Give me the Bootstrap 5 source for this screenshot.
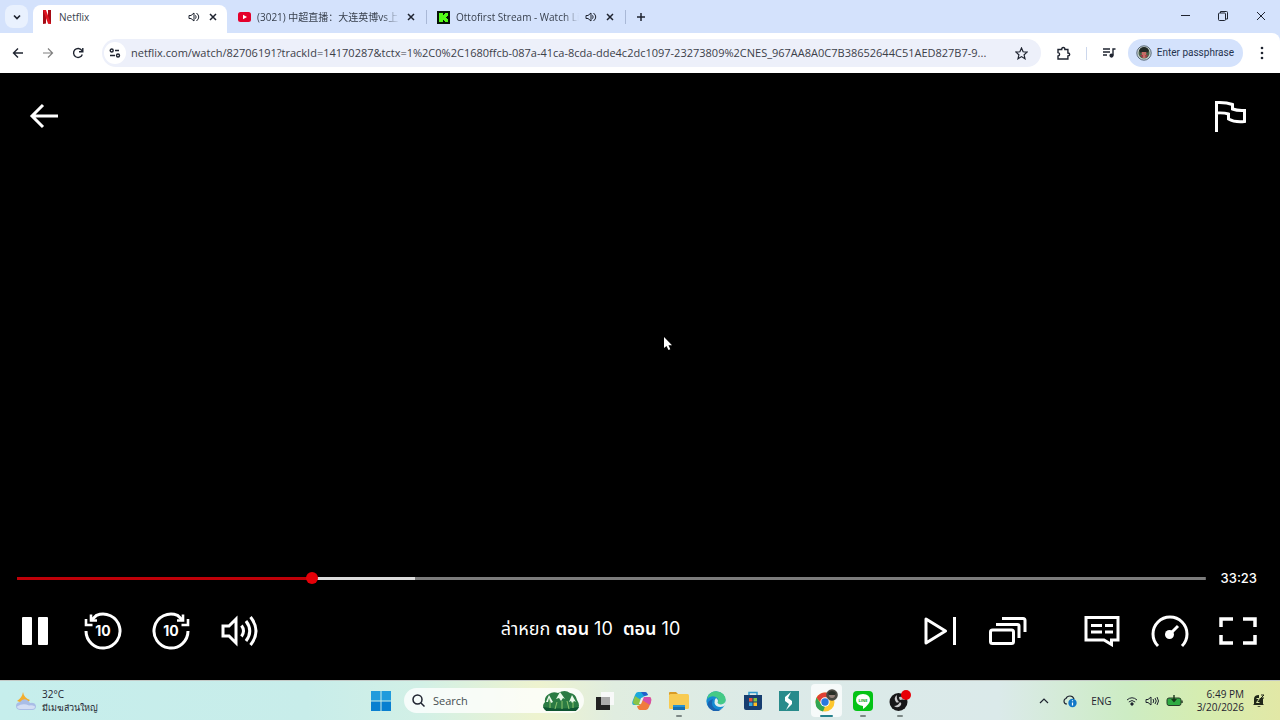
<!DOCTYPE html>
<html lang="en">
<head>
<meta charset="utf-8">
<meta name="viewport" content="width=device-width, initial-scale=1">
<title>Netflix</title>
<link rel="stylesheet" href="https://cdn.jsdelivr.net/npm/bootstrap@5.3.0/dist/css/bootstrap.min.css">
<style>
  body { font-family: "Open Sans", "Noto Sans", "Noto Sans CJK SC", sans-serif; font-size: 11px; line-height: 14px; color: #1f2430; background: #000; }
  button { background: none; border: 0; padding: 0; color: inherit; }
  svg { display: block; flex: none; }
  .ico { display: flex; align-items: center; justify-content: center; flex: none; }
  .line-art { fill: none; stroke: currentColor; }

  .browser-head { background: #d4e2fc; }
  .tabstrip { height: 33px; padding: 5px 0 0 5px; }
  .tab-search { width: 23px; height: 23px; border-radius: 8px; background: #e9f1fe; margin-right: 5px; }
  .tab-item { width: 198px; height: 28px; padding: 0 10px 4px 10px; gap: 6px; }
  .tab-item.current { width: 194px; background: #fff; border-radius: 8px 8px 0 0; margin-right: 1px; padding: 0 9px 4px 8px; }
  .tab-title { overflow: hidden; white-space: nowrap; flex: 1 1 0; font-size: 10px; color: #38404d; text-decoration: none; }
  .tab-sound { margin-right: 2px; }
  .fade-end { -webkit-mask-image: linear-gradient(90deg, #000 88%, transparent); mask-image: linear-gradient(90deg, #000 88%, transparent); }
  .tab-rule { width: 1px; height: 14px; background: #a9b8d6; margin-top: 5px; }
  .win-btn { width: 38px; height: 22px; }

  .toolbar { background: #fff; height: 40px; padding: 0 3px; border-radius: 0 8px 0 0; }
  .nav-btn { width: 30px; height: 28px; }
  .omnibox { height: 28px; border-radius: 14px; background: #edf0fa; padding: 0 4px 0 2px; margin-left: 9px; }
  .omnibox input { border: 0; background: none; outline: 0; flex: 1 1 0; min-width: 0; padding: 0; font-size: 11px; color: #3c4049; text-overflow: ellipsis; }
  .site-info { width: 22px; height: 22px; border-radius: 11px; background: #fff; margin-right: 5px; }
  .toolbar-rule { width: 1px; height: 13px; background: #ccd7ec; margin: 0 7px; }
  .profile-pill { height: 28px; border-radius: 14px; background: #d4e2fc; padding: 0 9px 0 8px; gap: 5px; font-family: Roboto, sans-serif; font-size: 10px; white-space: nowrap; color: #24334f; }

  .player { background: #000; color: #fff; font-family: Inter, "Noto Sans Thai", "Noto Sans", sans-serif; min-height: 400px; }
  .top-row { padding: 19px 26px 0 20px; }
  .player-btn { width: 48px; height: 48px; }
  .seek-row { padding: 0 23px 0 17px; gap: 15px; }
  .seek-time { font-size: 13px; line-height: 20px; font-weight: 500; }
  .seek { appearance: none; -webkit-appearance: none; flex: 1 1 0; min-width: 0; height: 12px; margin: 0; background: linear-gradient(90deg, #c00008 0 25%, #dcdcdc 25% 33.5%, #7c7c7c 33.5%) center / 100% 3px no-repeat; }
  .seek::-webkit-slider-thumb { -webkit-appearance: none; width: 12px; height: 12px; border-radius: 6px; background: #e50008; border: 0; }
  .controls { padding: 19px 18px 25px 11px; }
  .control-set { gap: 20px; }
  .set-break { margin-right: 26px; }
  .show-title { font-size: 18px; line-height: 24px; padding: 0 0 4px 2px; }
  .pointer { position: absolute; left: 51.8%; top: 43.5%; }

  .taskbar { height: 40px; grid-template-columns: 1fr 553px 1fr; padding-left: 3px; border-top: 1px solid #c3c9c6;
    background: linear-gradient(90deg, #c6eeec 0, #c8edea 24%, #d2f0e6 33%, #eef3cf 42%, #e0ede0 48%, #dceae8 60%, #dbeaea 78%, #cdecc4 88%, #d6edb0 94%, #e2e8a6 100%); }
  .find-box { width: 180px; height: 25px; border-radius: 13px; background: rgba(255,255,255,.78); padding: 0 4px 0 8px; gap: 8px; margin: 0 3px 0 7px; }
  .find-box input { flex: 1 1 0; min-width: 0; border: 0; padding: 0; background: none; outline: 0; font-size: 11px; }
  .find-box input::placeholder { color: #454e50; opacity: 1; }
  .start-btn { width: 32px; height: 32px; }
  .app-btn { flex: 1 1 0; height: 38px; position: relative; }
  .app-btn.open::after { content: ""; position: absolute; bottom: 3px; left: 50%; margin-left: -3px; width: 6px; height: 2px; border-radius: 1px; background: #7c8886; }
  .app-btn.front::after { margin-left: -6px; width: 13px; background: #26818c; }
  .app-btn.front .tile { background: rgba(255,255,255,.75); border-radius: 4px; }
  .tile { width: 31px; height: 33px; }
  .weather, .clock { font-size: 10px; line-height: 13px; }
  .weather { gap: 5px; padding-left: 12px; }
  .forecast { font-size: 9px; }
  .tray { gap: 14px; padding-right: 15px; font-size: 10px; }
  .tray-group { gap: 7px; }
</style>
</head>
<body>
<div class="d-flex flex-column min-vh-100">

  <header class="browser-head">
    <div class="tabstrip d-flex align-items-start">
      <button class="tab-search ico" aria-label="Search tabs"><svg class="line-art" width="10" height="10" viewBox="0 0 10 10" stroke-width="1.7"><path d="M2 3.5 5 6.5 8 3.5"/></svg></button>
      <div class="tab-item current d-flex align-items-center">
        <svg width="12" height="14" viewBox="0 0 12 14"><path fill="#a50a14" d="M2 0h3v13.5L2 14zM7 0h3v14l-3-.5z"/><path fill="#e01420" d="M2 0h3l5 14-3-.5z"/></svg>
        <a href="#" class="tab-title">Netflix</a>
        <svg class="line-art tab-sound" width="12" height="12" viewBox="0 0 12 12"><path d="M1 4.500h2L6 2v8L3 7.500H1zM7.500 4.300q1.300 1.700 0 3.400M8.500 2q4.500 4 0 8"/></svg>
        <button class="ico" aria-label="Close tab"><svg class="line-art" width="10" height="10" viewBox="0 0 10 10" stroke-width="1.500"><path d="m2 2 6 6m0-6-6 6"/></svg></button>
      </div>
      <div class="tab-item d-flex align-items-center">
        <svg width="13" height="10" viewBox="0 0 13 10"><rect width="13" height="10" rx="2.500" fill="#e4002b"/><path fill="#fff" d="M5 2.800v4.400L9 5z"/></svg>
        <a href="#" class="tab-title fade-end">(3021) 中超直播：大连英博vs上</a>
        <button class="ico" aria-label="Close tab"><svg class="line-art" width="10" height="10" viewBox="0 0 10 10" stroke-width="1.500"><path d="m2 2 6 6m0-6-6 6"/></svg></button>
      </div>
      <span class="tab-rule"></span>
      <div class="tab-item d-flex align-items-center">
        <svg width="13" height="13" viewBox="0 0 13 13"><path fill="#071407" d="M0 0h13v13H0z"/><path fill="#53fc18" d="M2 2h4v2h1V3h1V2h3v3h-1v1H9v1h1v1h1v3H8v-1H7V9H6v2H2z"/></svg>
        <a href="#" class="tab-title fade-end">Ottofirst Stream - Watch Liv</a>
        <svg class="line-art tab-sound" width="12" height="12" viewBox="0 0 12 12"><path d="M1 4.500h2L6 2v8L3 7.500H1zM7.500 4.300q1.300 1.700 0 3.400M8.500 2q4.500 4 0 8"/></svg>
        <button class="ico" aria-label="Close tab"><svg class="line-art" width="10" height="10" viewBox="0 0 10 10" stroke-width="1.500"><path d="m2 2 6 6m0-6-6 6"/></svg></button>
      </div>
      <span class="tab-rule"></span>
      <button class="ico ms-2 mt-1" aria-label="New tab"><svg class="line-art" width="14" height="16" viewBox="0 0 14 16" stroke-width="1.500"><path d="M3 8h8M7 4v8"/></svg></button>
      <div class="d-flex ms-auto">
        <button class="win-btn ico" aria-label="Minimize"><svg class="line-art" width="10" height="10" viewBox="0 0 10 10"><path d="M1 4.500h9"/></svg></button>
        <button class="win-btn ico" aria-label="Restore"><svg class="line-art" width="10" height="10" viewBox="0 0 10 10"><rect x=".5" y="2" width="7" height="7.500" rx="1"/><path d="M2.500 2V.5h6q1 0 1 1V8h-2"/></svg></button>
        <button class="win-btn ico" aria-label="Close"><svg class="line-art" width="10" height="10" viewBox="0 0 10 10"><path d="m1 1 8 8m0-8-8 8"/></svg></button>
      </div>
    </div>
    <div class="toolbar d-flex align-items-center">
      <button class="nav-btn ico" aria-label="Back"><svg class="line-art" width="12" height="12" viewBox="0 0 12 12" stroke-width="1.400"><path d="M11 6H1.500M6 1.500 1.500 6 6 10.500"/></svg></button>
      <button class="nav-btn ico text-black-50" aria-label="Forward"><svg class="line-art" width="12" height="12" viewBox="0 0 12 12" stroke-width="1.200"><path d="M1 6h9.500M6 1.500 10.500 6 6 10.500"/></svg></button>
      <button class="nav-btn ico" aria-label="Reload"><svg class="line-art" width="12" height="12" viewBox="0 0 12 12" stroke-width="1.400"><path d="M10.300 7.500A4.500 4.500 0 1 1 9.800 3.400L10.500 4.500M10.800 1v3.700H7"/></svg></button>
      <div class="omnibox d-flex align-items-center flex-grow-1">
        <button class="site-info ico" aria-label="Site information"><svg class="line-art" width="12" height="10" viewBox="0 0 12 10" stroke-width="1.400"><circle cx="2.700" cy="2.500" r="1.500"/><path d="M6 2.500h4M1 7.500h5"/><circle cx="9" cy="7.500" r="1.500"/></svg></button>
        <input type="text" aria-label="Address" value="netflix.com/watch/82706191?trackId=14170287&amp;tctx=1%2C0%2C1680ffcb-087a-41ca-8cda-dde4c2dc1097-23273809%2CNES_967AA8A0C7B38652644C51AED827B7-9...">
        <button class="nav-btn ico" aria-label="Bookmark"><svg class="line-art" width="13" height="13" viewBox="0 0 13 13" stroke-width="1.200"><path d="m6.500 1 1.600 3.800 4 .3-3 2.700.9 4-3.500-2.200L3 11.800l.9-4-3-2.700 4-.3z"/></svg></button>
      </div>
      <button class="ico nav-btn ms-2" aria-label="Extensions"><svg class="line-art" width="15" height="15" viewBox="0 0 15 15" stroke-width="1.400"><path d="M2 3.500h3.700q0-2 1.600-2t1.600 2h3V7q1.800 0 1.800 1.400T11.900 10v3H2V10q1.600-.3 1.600-1.800T2 6.600z"/></svg></button>
      <span class="toolbar-rule"></span>
      <button class="ico nav-btn" aria-label="Media controls"><svg class="line-art" width="14" height="12" viewBox="0 0 14 12" stroke-width="1.400"><path d="M1 2h7M1 5h7M1 8h4M13.500 2H11v6.500"/><circle cx="9.500" cy="8.600" r="1.400" fill="currentColor"/></svg></button>
      <button class="profile-pill d-flex align-items-center ms-1"><svg width="16" height="16" viewBox="0 0 16 16"><circle cx="8" cy="8" r="7.200" fill="#c9d2cf" stroke="#5a6b7c"/><circle cx="8" cy="8" r="5.500" fill="#496047"/><path fill="#222a27" d="M3 6q1-4 5-4t5 4l-2 2H5z"/><path fill="#c56d66" d="M5.500 7h5l-1 6h-3z"/><path fill="#a33b4a" d="M4 10h3v3zM9 10h3l-2 3z"/></svg>Enter passphrase</button>
      <button class="ico nav-btn ms-1" aria-label="Menu"><svg width="4" height="14" viewBox="0 0 4 14" fill="currentColor"><circle cx="2" cy="2" r="1.300"/><circle cx="2" cy="7" r="1.300"/><circle cx="2" cy="12" r="1.300"/></svg></button>
    </div>
  </header>

  <main class="player d-flex flex-column flex-grow-1 position-relative">
    <div class="top-row d-flex justify-content-between">
      <button class="player-btn ico" aria-label="Back to browse"><svg class="line-art" width="30" height="26" viewBox="0 0 30 26" stroke-width="3"><path d="M29 13H3M14 2 3 13l11 11"/></svg></button>
      <button class="player-btn ico" aria-label="Report a problem"><svg class="line-art" width="32" height="34" viewBox="0 0 32 34" stroke-width="3"><path d="M2.500 33V3.500Q12 3 18.500 5.500V10q5 2 12 1.500v11q-10 1-16-2.500V15Q10 13.500 2.500 14"/></svg></button>
    </div>
    <svg class="pointer" width="10" height="14" viewBox="0 0 10 14"><path fill="#fff" d="M1 0v11l2.500-2 2 4 1.800-.8-1.800-4H9z"/></svg>
    <div class="mt-auto">
      <div class="seek-row d-flex align-items-center">
        <input class="seek" type="range" min="0" max="1000" value="246" aria-label="Seek">
        <span class="seek-time">33:23</span>
      </div>
      <div class="controls d-flex align-items-center">
        <div class="control-set d-flex">
          <button class="player-btn ico" aria-label="Pause"><svg width="26" height="28" viewBox="0 0 26 28" fill="#fff"><rect width="10" height="28" rx="1"/><rect x="16" width="10" height="28" rx="1"/></svg></button>
          <button class="player-btn ico" aria-label="Back 10 seconds"><svg width="38" height="38" viewBox="0 0 38 38"><g class="line-art" stroke-width="3"><path d="M2 19A17 17 0 1 0 12.500 3.300L7 8.500"/><path d="M7 2.500v6h6M2 7v6h6.500" stroke-width="2.600"/></g><text x="19" y="24" text-anchor="middle" font-size="14" font-weight="700" fill="#fff">10</text></svg></button>
          <button class="player-btn ico" aria-label="Forward 10 seconds"><svg width="38" height="38" viewBox="0 0 38 38"><g class="line-art" stroke-width="3"><path d="M36 19A17 17 0 1 1 25.500 3.300L31 8.500"/><path d="M31 2.500v6h-6M36 7v6h-6.500" stroke-width="2.600"/></g><text x="19" y="24" text-anchor="middle" font-size="14" font-weight="700" fill="#fff">10</text></svg></button>
          <button class="player-btn ico" aria-label="Volume"><svg class="line-art" width="38" height="32" viewBox="0 0 38 32" stroke-width="3"><path d="M3 11h6l7-7v24l-7-7H3z"/><path d="M21.500 10.500q4 5.500 0 11M26 6q7.500 10 0 20M30.500 2q11 14 0 28"/></svg></button>
        </div>
        <div class="show-title flex-grow-1 text-center text-nowrap">ล่าหยก <span class="fw-semibold">ตอน</span> 10&nbsp; <span class="fw-semibold">ตอน</span> 10</div>
        <div class="control-set d-flex">
          <button class="player-btn ico" aria-label="Next episode"><svg class="line-art" width="32" height="28" viewBox="0 0 32 28" stroke-width="3"><path d="M2 2v24l19.500-12z" stroke-linejoin="round"/><path d="M30.500 0v28"/></svg></button>
          <button class="player-btn ico set-break" aria-label="Episodes"><svg class="line-art" width="38" height="30" viewBox="0 0 38 30" stroke-width="3"><rect x="1.500" y="14" width="23" height="13.500" rx="2"/><path d="M7 8.500h21.500q1.500 0 1.500 1.500v12M13 2.500h21q2 0 2 2V16"/></svg></button>
          <button class="player-btn ico" aria-label="Audio and subtitles"><svg class="line-art" width="36" height="32" viewBox="0 0 36 32" stroke-width="3"><path d="M2 2.500h32v22.500h-6.500v4.500L20 25H2z"/><path d="M7 10.500h11M21 10.500h8M7 17h11M21 17h8"/></svg></button>
          <button class="player-btn ico" aria-label="Playback speed"><svg class="line-art" width="38" height="34" viewBox="0 0 38 34" stroke-width="3"><path d="M7 32A17 17 0 1 1 31 32M19 20l8-8"/><circle cx="18.500" cy="20.500" r="4.500" fill="#fff" stroke="none"/></svg></button>
          <button class="player-btn ico" aria-label="Fullscreen"><svg class="line-art" width="38" height="28" viewBox="0 0 38 28" stroke-width="3.500"><path d="M2 10V2h12M24 2h12v8M36 18v8H24M14 26H2v-8"/></svg></button>
        </div>
      </div>
    </div>
  </main>

  <footer class="taskbar d-grid align-items-center">
    <button class="weather d-flex align-items-center text-start"><svg width="22" height="22" viewBox="0 0 22 22"><path d="M8 2q1 6 7 8l-4 4-9-3q5-3 6-9z" fill="#f3ae2e"/><path d="M5 20q-4-.5-4-4t4-4q3-4 7-2 2 1 3 3 5-1 6 3 0 4-4 4z" fill="#a9bde6"/><path d="M5 19q-3-.5-3-2.500 6-4 12-1 3-1 6 1 0 2.500-3 2.500z" fill="#d3def4"/></svg><span>32°C<br><span class="forecast">มีเมฆส่วนใหญ่</span></span></button>
    <div class="d-flex align-items-center">
      <button class="ico start-btn" aria-label="Start"><svg width="20" height="20" viewBox="0 0 20 20"><path fill="#209bdc" d="M0 0h9.500v9.500H0zM10.500 0H20v9.500h-9.500z"/><path fill="#087fd0" d="M0 10.500h9.500V20H0zM10.500 10.500H20V20h-9.500z"/></svg></button>
      <div class="find-box d-flex align-items-center">
        <svg class="line-art" width="13" height="13" viewBox="0 0 13 13" stroke-width="1.500"><circle cx="5.500" cy="5.500" r="4.500"/><path d="m9 9 3.500 3.500"/></svg>
        <input type="text" placeholder="Search" aria-label="Search">
        <svg width="38" height="21" viewBox="0 0 38 21"><path fill="#2b7b43" d="M3 20q-4-4 0-8-1-5 4-8 4-3 9-1 7-4 12 0 6 1 7 7 4 6 0 10z"/><path fill="#0e5531" d="M1 17q18 3 36 0l-3 4H4z"/><path stroke="#8bc36d" fill="none" d="M8 18V9M13 19l2-7M20 19v-8M27 19l-2-8M31 18V9"/><path fill="#eaf9e9" d="M7 5 4 12h2l1-4 2 5 2-1zM18 2l-4 7 3-1 2 3 2-3 2 1zM30 5l-3 7 2-1 1 2 2-2 2 1z"/></svg>
      </div>
      <div class="d-flex flex-grow-1">
        <button class="app-btn ico" aria-label="Task view"><svg width="20" height="20" viewBox="0 0 20 20"><path fill="#f8f9f9" d="M6 1h13v13H6z"/><path fill="#222" d="M1 6h14v13H1z"/><path fill="#aaa" d="M6 6h9v8H6z"/></svg></button>
        <button class="app-btn ico" aria-label="Copilot"><svg width="20" height="20" viewBox="0 0 20 20"><path fill="#1aa8dc" d="M6 1h7q2 0 3 3l-3 1q-2 0-3 3l-2 6H2q-3 0-1-5l2-5q1-3 3-3z"/><path fill="#8bc448" d="M3 5q-2 5-2 7 1 2 4 2h3l1-5z"/><path fill="#245fcb" d="M9 1h4q2 0 3 3l-4 1z"/><path fill="#f07b3d" d="M14 19H8q-2 0-3-4 3 0 4-3l2-6h6q3 0 2 5l-2 5q-1 3-3 3z"/><path fill="#d44eab" d="M11 6h6q3 0 2 5l-1 3-8-5z"/><path fill="#e9f1ee" d="m9 7 3-1-3 7H7z"/></svg></button>
        <button class="app-btn open ico" aria-label="File Explorer"><svg width="22" height="20" viewBox="0 0 22 20"><path fill="#d99b25" d="M1 2q0-1 1-1h6l3 3H1z"/><rect x="1" y="3" width="20" height="15" rx="1.500" fill="#f8cb52"/><path fill="#176fae" d="M5 19v-4q0-1 1-1h10q1 0 1 1v4z"/><path fill="#2794d4" d="M5 14h12v2H5z"/></svg></button>
        <button class="app-btn ico" aria-label="Edge"><svg width="20" height="20" viewBox="0 0 20 20"><circle cx="10" cy="10" r="9.700" fill="#168bd3"/><path fill="#45ca86" d="M2 5Q5 0 11 .4q8 .6 8.700 8.600 0 4-4 4.500-4 0-4-2 2-4-2-5.500Q5 4 1 8z"/><path fill="#1a62b0" d="M7 8q-3 7 3 10 4 2 7-1-7 7-14 0-4-6 4-9z"/><path fill="#e2efec" d="M10 7q-2 2-1.500 5 1 4 6 4 3 0 5-2l.5-5q-1 4-5 4.500-3 0-3.500-2Q13 9 10 7z"/></svg></button>
        <button class="app-btn ico" aria-label="Microsoft Store"><svg width="20" height="20" viewBox="0 0 20 20"><path fill="none" stroke="#319bce" stroke-width="1.500" d="M6 5V1.500h8V5"/><path fill="#173e70" d="M1 4h18v13q0 2-2 2H3q-2 0-2-2z"/><path fill="#ee5137" d="M6 7h3.500v3.500H6z"/><path fill="#85c441" d="M10.500 7H14v3.500h-3.500z"/><path fill="#36a9e1" d="M6 11.500h3.500V15H6z"/><path fill="#ffbd22" d="M10.500 11.500H14V15h-3.500z"/></svg></button>
        <button class="app-btn ico" aria-label="Streaming app"><svg width="20" height="20" viewBox="0 0 20 20"><path fill="#288b8b" d="M0 0h20v20H0z"/><path fill="#fff" d="M12 1 6 6v4l4 3-3 6 6-6v-3L9 7z"/></svg></button>
        <button class="app-btn open front ico" aria-label="Chrome"><span class="tile ico"><svg width="24" height="24" viewBox="0 0 24 24"><circle cx="11" cy="13" r="9.500" fill="#fdc72e"/><path fill="#df4034" d="M11 13H6L2.500 8.500Q6 3.500 11 3.500q6 0 8.500 5H11z"/><path fill="#31a552" d="M2.500 8.500 7 15l4 2.500-2 5Q1.500 21 1.500 13q0-2 1-4.500z"/><circle cx="11" cy="13" r="4.700" fill="#fff"/><circle cx="11" cy="13" r="3.700" fill="#2877dd"/><circle cx="18" cy="6" r="5.800" fill="#4b4a43"/><circle cx="18" cy="6" r="3" fill="#95827a"/><path fill="#292f27" d="M14 4q4-4 8 0l-1 2h-6z"/></svg></span></button>
        <button class="app-btn open ico" aria-label="LINE"><svg width="20" height="20" viewBox="0 0 20 20"><rect width="20" height="20" rx="4" fill="#05c316"/><path fill="#fff" d="M10 3q7 .5 7 6 0 4-7 9v-3q-7-1-7-6 0-5.500 7-6z"/><text x="10" y="11" font-size="4" font-weight="700" text-anchor="middle" fill="#05a116">LINE</text></svg></button>
        <button class="app-btn open ico" aria-label="OBS Studio"><svg width="22" height="24" viewBox="0 0 22 24"><circle cx="9.500" cy="13" r="9" fill="#171719"/><g fill="#c9c9cb"><path d="M8 6q-4 3-1 7 1 1 3 0-3-3-2-7zM16 11q-1-4-6-3 0 2 1 3 3-1 5 0zM5 17q4 3 7-1 1-2-1-3-2 4-6 4z"/></g><circle cx="17" cy="6" r="5" fill="#e80007"/></svg></button>
      </div>
    </div>
    <div class="tray d-flex align-items-center justify-content-end">
      <button class="ico" aria-label="Show hidden icons"><svg class="line-art" width="10" height="8" viewBox="0 0 10 8" stroke-width="1.200"><path d="m1 6 4-4 4 4"/></svg></button>
      <button class="ico" aria-label="OneDrive"><svg width="14" height="14" viewBox="0 0 14 14"><path class="line-art" stroke-width="1.200" d="M4 10Q1 10 1 7q0-2 2-2.500Q4 2 7 2t4 3"/><circle cx="9.500" cy="9" r="4.200" fill="#1278c8"/><path stroke="#fff" stroke-width="1.200" d="M9.500 8.500v3M9.500 6.300v1"/></svg></button>
      <button>ENG</button>
      <button class="tray-group d-flex align-items-center" aria-label="Network, volume and battery">
        <svg class="line-art" width="12" height="12" viewBox="0 0 12 12"><path d="M1 5q5-4.500 10 0M2.800 7q3.200-3 6.400 0"/><circle cx="6" cy="9" r="1.200" fill="currentColor"/></svg>
        <svg class="line-art" width="14" height="12" viewBox="0 0 14 12"><path d="M1 4.500h2L6 2v8L3 7.500H1zM8 4q1.500 2 0 4M10 3q2.500 3 0 6M12 2q3 4 0 8"/></svg>
        <svg width="17" height="12" viewBox="0 0 17 12"><rect x="1" y="3" width="14" height="7.500" rx="2" fill="#2fab43" stroke="#283d29"/><path stroke="#283d29" stroke-width="1.500" d="M16 5.500V8"/><path fill="#173719" d="M7.300 0h1.400v4H11L8 7.500 5 4h2.300z"/></svg>
      </button>
      <div class="d-flex align-items-center gap-2">
        <button class="clock text-end">6:49 PM<br>3/20/2026</button>
        <button class="ico" aria-label="Notifications"><svg width="13" height="13" viewBox="0 0 13 13"><path fill="#202719" d="M2 10V5q0-4 5-4v3h4v6l1 1H1zM5 12h4l-2 1z"/><path fill="none" stroke="#d9e5a5" d="M4.500 4.500h3l-3 4h3"/><path fill="none" stroke="#202719" d="M9 1h3L9 4h3"/></svg></button>
      </div>
    </div>
  </footer>
</div>
<script src="https://cdn.jsdelivr.net/npm/bootstrap@5.3.0/dist/js/bootstrap.bundle.min.js"></script>
</body>
</html>
